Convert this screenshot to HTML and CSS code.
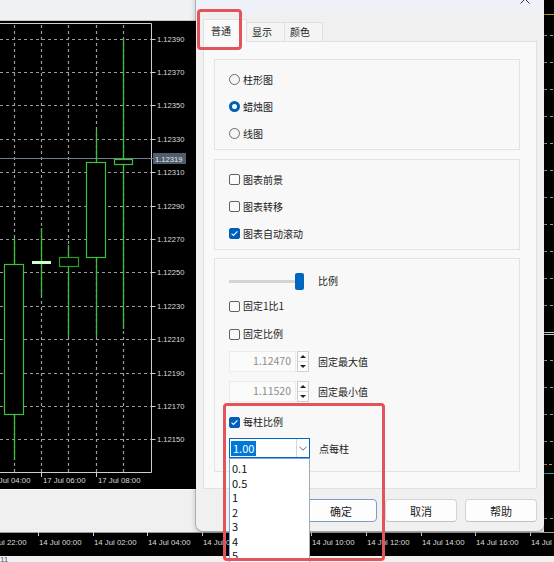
FILE: index.html
```html
<!DOCTYPE html>
<html lang="zh-CN">
<head>
  <meta charset="UTF-8">
  <meta name="viewport" content="width=device-width, initial-scale=1.0">
  <title>属性</title>
  <link rel="stylesheet" href="styles.css">
</head>
<body>
  <!-- Terminal behind the dialog -->
  <div class="desk">
    <div class="toolbar"></div>

    <svg class="chart-main" width="554" height="468" viewBox="0 21 554 468">
      <rect class="chart-bg" x="0" y="21" width="554" height="468"/>
      <g class="grid">
        <path d="M0 39.5H151M0 72.5H151M0 105.5H151M0 139.5H151M0 172.5H151M0 206.5H151M0 239.5H151M0 272.5H151M0 306.5H151M0 339.5H151M0 373.5H151M0 406.5H151M0 439.5H151"/>
        <path d="M14.5 25V472M41.5 25V472M68.5 25V472M96.5 25V472M123.5 25V472"/>
      </g>
      <path class="frame" d="M0 23.5 H151.5 V472.5 H0"/>
      <g class="ticks">
        <path d="M151.5 39.5h4M151.5 72.5h4M151.5 105.5h4M151.5 139.5h4M151.5 172.5h4M151.5 206.5h4M151.5 239.5h4M151.5 272.5h4M151.5 306.5h4M151.5 339.5h4M151.5 373.5h4M151.5 406.5h4M151.5 439.5h4"/>
        <path d="M41.5 472v5M96.5 472v5"/>
      </g>
      <g class="price">
        <text x="157" y="42.3">1.12390</text>
        <text x="157" y="75.3">1.12370</text>
        <text x="157" y="108.3">1.12350</text>
        <text x="157" y="142.3">1.12330</text>
        <text x="157" y="175.3">1.12310</text>
        <text x="157" y="209.3">1.12290</text>
        <text x="157" y="242.3">1.12270</text>
        <text x="157" y="275.3">1.12250</text>
        <text x="157" y="309.3">1.12230</text>
        <text x="157" y="342.3">1.12210</text>
        <text x="157" y="376.3">1.12190</text>
        <text x="157" y="409.3">1.12170</text>
        <text x="157" y="442.3">1.12150</text>
      </g>
      <path class="bid-line" d="M0 158.5H153"/>
      <rect class="bid-box" x="153" y="153" width="33" height="11"/>
      <text class="bid-text" x="155" y="161.6">1.12319</text>

      <g class="candle">
        <path class="wick" d="M14.5 238V460"/>
        <rect x="4.5" y="264.5" width="19" height="150"/>
      </g>
      <g class="candle">
        <path class="wick" d="M41.5 228V296"/>
        <path class="doji" d="M32 262.5H51"/>
      </g>
      <g class="candle dim">
        <path class="wick" d="M68.5 245V337"/>
        <rect x="59.5" y="257.5" width="19" height="9"/>
      </g>
      <g class="candle">
        <path class="wick" d="M96.5 130V337"/>
        <rect x="86.5" y="162.5" width="19" height="95"/>
      </g>
      <g class="candle">
        <path class="wick" d="M123.5 39V329"/>
        <rect x="114.5" y="159.5" width="18" height="5"/>
      </g>

      <g class="time">
        <text x="-12" y="483">17 Jul 04:00</text>
        <text x="43" y="483">17 Jul 06:00</text>
        <text x="98" y="483">17 Jul 08:00</text>
      </g>
    </svg>

    <div class="gap"></div>

    <svg class="axis-strip" width="554" height="24" viewBox="0 532 554 24">
      <rect class="chart-bg" x="0" y="532" width="554" height="24"/>
      <path class="axis-top" d="M0 532.5H554"/>
      <g class="ticks">
        <path d="M38.5 532v4M93.5 532v4M147.5 532v4M202.5 532v4M311.5 532v4M366.5 532v4M421.5 532v4M475.5 532v4M530.5 532v4"/>
      </g>
      <g class="time">
        <text x="-16" y="544.5">13 Jul 22:00</text>
        <text x="39" y="544.5">14 Jul 00:00</text>
        <text x="94" y="544.5">14 Jul 02:00</text>
        <text x="148" y="544.5">14 Jul 04:00</text>
        <text x="203" y="544.5">14 Jul 06:00</text>
        <text x="257" y="544.5">14 Jul 08:00</text>
        <text x="312" y="544.5">14 Jul 10:00</text>
        <text x="367" y="544.5">14 Jul 12:00</text>
        <text x="422" y="544.5">14 Jul 14:00</text>
        <text x="476" y="544.5">14 Jul 16:00</text>
        <text x="531" y="544.5">14 Jul 18:00</text>
      </g>
    </svg>

    <div class="status">11</div>
  </div>

  <!-- Edge of the next chart window -->
  <svg class="side-chart" width="10" height="532" viewBox="544 0 10 532">
    <rect class="chart-bg" x="544" y="0" width="10" height="532"/>
    <path class="level-gold" d="M544 14.5H554"/>
    <g class="grid">
      <path d="M544 35.5H554M544 62.5H554M544 89.5H554M544 116.5H554M544 143.5H554M544 170.5H554M544 197.5H554M544 224.5H554M544 251.5H554M544 278.5H554M544 305.5H554M544 360.5H554M544 387.5H554M544 414.5H554M544 441.5H554M544 518.5H554"/>
    </g>
    <path class="level-white" d="M544 332.5H554M544 334.5H554"/>
    <path class="level-gold dashed" d="M544 464.5H554"/>
    <path class="level-cyan" d="M544 473.5H554"/>
  </svg>

  <!-- Properties dialog -->
  <div class="dialog">
    <div class="titlebar">
      <span class="help"></span>
      <svg class="close" width="10" height="10" viewBox="0 0 10 10"><path d="M0.5 0.5L9.5 9.5M9.5 0.5L0.5 9.5"/></svg>
    </div>

    <div class="dlg-body">
      <div class="tabs">
        <div class="tab active">普通</div>
        <div class="tab">显示</div>
        <div class="tab">颜色</div>
      </div>

      <div class="panel">
        <div class="group">
          <div class="opt"><span class="radio"></span>柱形图</div>
          <div class="opt"><span class="radio on"></span>蜡烛图</div>
          <div class="opt"><span class="radio"></span>线图</div>
        </div>

        <div class="group">
          <div class="opt"><span class="check"></span>图表前景</div>
          <div class="opt"><span class="check"></span>图表转移</div>
          <div class="opt">
            <span class="check on"><svg width="9" height="9" viewBox="0 0 9 9"><path d="M1.6 4.7L3.5 6.5L7.4 2.4"/></svg></span>图表自动滚动
          </div>
        </div>

        <div class="group scale">
          <div class="row row-slider">
            <div class="slider"><span class="thumb"></span></div>
            <span class="side-label slider-label">比例</span>
          </div>
          <div class="opt"><span class="check"></span>固定1比1</div>
          <div class="opt"><span class="check"></span>固定比例</div>
          <div class="row field-row">
            <div class="spin-field">1.12470</div>
            <div class="spin-btns"><span class="spin-up"></span><span class="spin-down"></span></div>
            <span class="side-label">固定最大值</span>
          </div>
          <div class="row field-row second">
            <div class="spin-field">1.11520</div>
            <div class="spin-btns"><span class="spin-up"></span><span class="spin-down"></span></div>
            <span class="side-label">固定最小值</span>
          </div>
          <div class="opt opt-bar">
            <span class="check on"><svg width="9" height="9" viewBox="0 0 9 9"><path d="M1.6 4.7L3.5 6.5L7.4 2.4"/></svg></span>每柱比例
          </div>
          <div class="row field-row combo-row">
            <div class="combo">
              <div class="combo-text"><span class="selected">1.00</span></div>
              <div class="combo-btn"><svg width="8" height="5" viewBox="0 0 8 5"><path d="M0.5 0.8L4 4.2L7.5 0.8"/></svg></div>
              <ul class="combo-list">
                <li>0.1</li>
                <li>0.5</li>
                <li>1</li>
                <li>2</li>
                <li>3</li>
                <li>4</li>
                <li>5</li>
              </ul>
            </div>
            <span class="side-label">点每柱</span>
          </div>
        </div>
      </div>

      <div class="buttons">
        <button class="btn default">确定</button>
        <button class="btn">取消</button>
        <button class="btn">帮助</button>
      </div>
    </div>
  </div>

  <!-- Red annotation boxes -->
  <div class="mark mark-tab"></div>
  <div class="mark mark-scale"></div>
</body>
</html>
```

FILE: styles.css
```css
* {
  margin: 0;
  padding: 0;
  box-sizing: border-box;
}

body {
  position: relative;
  width: 554px;
  height: 562px;
  overflow: hidden;
  background-color: #f0f0f0;
  font-family: "Noto Sans CJK SC", "Noto Sans", sans-serif;
  font-size: 10px;
  color: #1b1b1b;
}

svg {
  display: block;
}

/* Terminal behind the dialog */
.toolbar {
  height: 21px;
  background-color: #f0f1f4;
  border-bottom: 1px solid #c6c8cc;
}

.chart-main,
.axis-strip {
  font-family: "Liberation Sans", Arial, sans-serif;
}

.chart-bg {
  fill: #000;
}

.grid path {
  fill: none;
  stroke: #9c9c9c;
  stroke-width: 1.2;
  stroke-dasharray: 3 3;
}

.frame {
  fill: none;
  stroke: #cfcfcf;
}

.ticks path {
  fill: none;
  stroke: #cfcfcf;
}

.price {
  font-size: 7.6px;
  fill: #dcdcdc;
}

.bid-line {
  fill: none;
  stroke: #6f808f;
}

.bid-box {
  fill: #4f5d6c;
}

.bid-text {
  font-size: 7.6px;
  fill: #e6e6e6;
}

.candle rect {
  fill: #000;
  stroke: #3cc03c;
  stroke-width: 1.2;
}

.candle .wick {
  fill: none;
  stroke: #3cc03c;
  stroke-width: 1.3;
}

.candle.dim rect {
  stroke: #2e9a2e;
}

.candle .doji {
  fill: none;
  stroke: #d2ffd2;
  stroke-width: 3;
}

.time {
  font-size: 7.8px;
  fill: #dcdcdc;
}

.gap {
  height: 43px;
  background-color: #f0f0f0;
  border-top: 1px solid #fafafa;
}

.axis-top {
  fill: none;
  stroke: #9a9a9a;
}

.status {
  height: 6px;
  overflow: hidden;
  font-family: "Liberation Sans", Arial, sans-serif;
  font-size: 8px;
  line-height: 8px;
  color: #41618f;
}

.side-chart {
  position: absolute;
  top: 0;
  right: 0;
}

.side-chart path {
  fill: none;
}

.level-gold {
  stroke: #b59b2e;
}

.level-gold.dashed {
  stroke-dasharray: 3 2;
}

.level-white {
  stroke: #d0d0d0;
}

.level-cyan {
  stroke: #3a9c9c;
}

/* Dialog */
.dialog {
  position: absolute;
  left: 196px;
  top: -20px;
  width: 348px;
  height: 551px;
  background-color: #f0f0f0;
  border-radius: 0 0 7px 7px;
  box-shadow: 0 0 0 1px rgba(0, 0, 0, 0.18), 0 2px 6px rgba(0, 0, 0, 0.25);
}

.titlebar {
  display: flex;
  justify-content: flex-end;
  align-items: flex-end;
  gap: 33px;
  height: 33px;
  padding: 0 14px 9px 0;
  background-color: #eef2f8;
}

/* only the foot of the help glyph shows above the edge */
.help {
  width: 2px;
  height: 3px;
  margin-bottom: 7px;
  background-color: #555;
}

.close path {
  stroke: #333;
  stroke-width: 1;
  fill: none;
}

.dlg-body {
  padding: 7px 7px 0 7px;
}

.tabs {
  display: flex;
  align-items: flex-end;
  height: 21px;
}

.tab {
  display: flex;
  align-items: center;
  width: 39px;
  height: 19px;
  padding-left: 5px;
  line-height: 1;
  background-color: #f4f4f4;
  border: 1px solid #e0e0e0;
  border-bottom: none;
  margin-left: -1px;
}

.tab.active {
  position: relative;
  z-index: 1;
  width: 44px;
  height: 23px;
  margin-left: 0;
  margin-bottom: -1px;
  padding-left: 7px;
  padding-bottom: 1px;
  background-color: #f9f9f9;
}

.panel {
  height: 448px;
  padding: 17px 16px 0 10px;
  background-color: #f9f9f9;
  border: 1px solid #e0e0e0;
}

.group {
  padding: 6px 14px 2px;
  background-color: #f8f8f8;
  border: 1px solid #e3e3e3;
}

.group + .group {
  margin-top: 9px;
}

.group.scale {
  margin-top: 8px;
  padding: 11px 14px 12px;
}

.opt {
  display: flex;
  align-items: center;
  gap: 3px;
  height: 27px;
  line-height: 1;
}

.scale .opt {
  height: 28px;
}

.scale .opt-bar {
  height: 26px;
  margin-top: 7px;
}

.radio {
  width: 11px;
  height: 11px;
  border: 1px solid #6b6b6b;
  border-radius: 50%;
  background-color: #f6f6f6;
}

.radio.on {
  border: 3px solid #005fb8;
  background-color: #fff;
}

.check {
  display: flex;
  align-items: center;
  justify-content: center;
  width: 11px;
  height: 11px;
  border: 1px solid #626262;
  border-radius: 2px;
  background-color: #fbfbfb;
}

.check.on {
  border-color: #005fb8;
  background-color: #005fb8;
}

.check path {
  fill: none;
  stroke: #fff;
  stroke-width: 1.1;
}

.row {
  display: flex;
  align-items: center;
  line-height: 1;
}

.row-slider {
  height: 22px;
}

.slider {
  display: flex;
  align-items: center;
  justify-content: flex-end;
  width: 75px;
  height: 18px;
  background: linear-gradient(#d4d4d4, #d4d4d4) no-repeat left center / 70px 3px;
}

.thumb {
  width: 9px;
  height: 17px;
  background-color: #0067c0;
  border-radius: 2px;
}

.side-label {
  margin-left: 9px;
}

.slider-label {
  margin-left: 14px;
}

.field-row {
  height: 21px;
  margin-top: 3px;
}

.field-row.second {
  margin-top: 9px;
}

.spin-field {
  display: flex;
  align-items: center;
  justify-content: flex-end;
  width: 67px;
  height: 21px;
  padding-right: 4px;
  font-size: 10.5px;
  color: #8c8c8c;
  background-color: #fbfbfb;
  border: 1px solid #ececec;
}

.spin-btns {
  display: flex;
  flex-direction: column;
  width: 12px;
  height: 21px;
  margin-left: 1px;
  border: 1px solid #cfcfcf;
  background-color: #fdfdfd;
}

.spin-up,
.spin-down {
  display: flex;
  align-items: center;
  justify-content: center;
  flex: 1;
}

.spin-up {
  border-bottom: 1px solid #dcdcdc;
}

.spin-up::after {
  content: "";
  border-left: 3px solid transparent;
  border-right: 3px solid transparent;
  border-bottom: 3px solid #222;
}

.spin-down::after {
  content: "";
  border-left: 3px solid transparent;
  border-right: 3px solid transparent;
  border-top: 3px solid #222;
}

.combo {
  position: relative;
  display: flex;
  width: 81px;
  height: 21px;
  background-color: #fff;
  border: 1px solid #0067c0;
  border-bottom-width: 2px;
}

.combo-text {
  display: flex;
  align-items: center;
  flex: 1;
  padding-left: 1px;
}

.selected {
  display: flex;
  align-items: center;
  height: 15px;
  padding: 0 2px;
  font-size: 11px;
  color: #fff;
  background-color: #0078d7;
}

.combo-btn {
  display: flex;
  align-items: center;
  justify-content: center;
  width: 13px;
  border-left: 1px solid #c7d7ea;
}

.combo-btn path {
  fill: none;
  stroke: #6a6a6a;
  stroke-width: 1;
}

/* Open dropdown hangs over the buttons and the desk */
.combo-list {
  position: absolute;
  z-index: 5;
  top: 19px;
  left: -1px;
  width: 81px;
  height: 110px;
  padding-top: 2px;
  list-style: none;
  background-color: #fff;
  border: 1px solid #7aa6d8;
  border-right-color: #a9a9a9;
}

.combo-list li {
  height: 14.5px;
  padding-left: 2px;
  font-size: 11px;
  line-height: 14.5px;
  color: #111;
}

.buttons {
  display: flex;
  justify-content: flex-end;
  gap: 8px;
  margin-top: 10px;
}

.btn {
  width: 72px;
  height: 23px;
  font-family: inherit;
  font-size: 11px;
  color: #1b1b1b;
  background-color: #fdfdfd;
  border: 1px solid #d3d3d3;
  border-bottom-color: #c2c2c2;
  border-radius: 4px;
}

.btn.default {
  border-color: #7b9cc8;
}

/* Red annotation boxes */
.mark {
  position: absolute;
  z-index: 10;
  border: 3px solid #e3545a;
  border-radius: 4px;
}

.mark-tab {
  left: 197px;
  top: 9px;
  width: 45px;
  height: 41px;
}

.mark-scale {
  left: 223px;
  top: 403px;
  width: 162px;
  height: 158px;
}
```
